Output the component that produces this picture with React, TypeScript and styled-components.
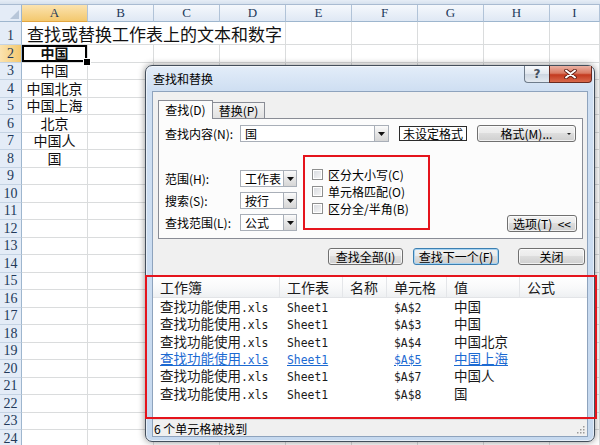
import React from 'react';
import styled, { createGlobalStyle } from 'styled-components';

const GlobalStyle = createGlobalStyle`
  html, body { margin: 0; padding: 0; background: #fff; overflow: hidden; }
  body { font-family: "Noto Sans CJK SC", sans-serif; }
  * { box-sizing: border-box; }
`;

const CJK = `"Noto Sans CJK SC", "Noto Sans", sans-serif`;

const Page = styled.div`
  position: relative;
  width: 600px;
  height: 445px;
  overflow: hidden;
  background: #fff;
`;

/* ---------- Spreadsheet ---------- */
const Sheet = styled.div`
  display: grid;
  grid-template-columns: 22px repeat(8, 66px) 50px;
  grid-template-rows: 5px 17px 23px repeat(23, 17.5px);
  font-family: ${CJK};
`;

const TopStrip = styled.div`
  grid-column: 1 / -1;
  background: linear-gradient(#e6edf6, #d6e1ee);
  border-bottom: 1px solid #a9bbd1;
`;

const Corner = styled.div`
  position: relative;
  background: #e4ecf7;
  border-right: 1px solid #9eb6ce;
  border-bottom: 1px solid #9eb6ce;
  &::after {
    content: '';
    position: absolute;
    right: 2px;
    bottom: 2px;
    border-left: 9px solid transparent;
    border-bottom: 9px solid #b7c6d9;
  }
`;

const ColHead = styled.div<{ $active?: boolean }>`
  display: flex;
  align-items: center;
  justify-content: center;
  font-family: "Liberation Serif", serif;
  font-size: 13px;
  color: #22395a;
  background: ${(p) =>
    p.$active ? 'linear-gradient(#fbe3b0, #f3c86e)' : 'linear-gradient(#f5f8fc, #dfe8f4)'};
  border-right: 1px solid #b1c3d8;
  border-bottom: 1px solid ${(p) => (p.$active ? '#e2a640' : '#9eb6ce')};
`;

const RowHead = styled.div<{ $active?: boolean }>`
  display: flex;
  align-items: flex-end;
  justify-content: center;
  font-family: "Liberation Serif", serif;
  font-size: 14px;
  line-height: 17px;
  color: #22395a;
  background: ${(p) => (p.$active ? 'linear-gradient(90deg, #fbe3b0, #f3c86e)' : '#e4ecf7')};
  border-right: 1px solid #9eb6ce;
  border-bottom: 1px solid #c5d3e3;
`;

const Cell = styled.div<{ $center?: boolean; $bold?: boolean; $selected?: boolean; $span?: number; $big?: boolean }>`
  position: relative;
  grid-column: span ${(p) => p.$span || 1};
  display: flex;
  align-items: center;
  justify-content: ${(p) => (p.$center ? 'center' : 'flex-start')};
  padding-left: ${(p) => (p.$big ? 5 : 0)}px;
  white-space: nowrap;
  font-size: ${(p) => (p.$big ? 17 : 14)}px;
  line-height: ${(p) => (p.$big ? 21 : 17)}px;
  font-weight: ${(p) => (p.$bold ? 700 : 400)};
  color: #111;
  border-right: 1px solid #dadcdd;
  border-bottom: 1px solid #dadcdd;
  box-shadow: ${(p) => (p.$selected ? 'inset 0 0 0 2px #000' : 'none')};
  &::after {
    content: '';
    display: ${(p) => (p.$selected ? 'block' : 'none')};
    position: absolute;
    right: -4px;
    bottom: -4px;
    width: 6px;
    height: 6px;
    background: #000;
    border: 1px solid #fff;
    z-index: 1;
  }
`;

/* ---------- Dialog ---------- */
const Dialog = styled.div`
  position: absolute;
  left: 145px;
  top: 65px;
  width: 450px;
  height: 377px;
  border: 1px solid #434e5b;
  border-radius: 7px;
  padding: 0 6px 4px 6px;
  background: linear-gradient(180deg, #e3edf9 0px, #cfdff2 24px, #c6d9ef 100%);
  box-shadow: 0 0 7px rgba(0, 0, 0, 0.45), inset 0 0 0 1px rgba(255, 255, 255, 0.55);
  display: flex;
  flex-direction: column;
  font-family: ${CJK};
  font-size: 12px;
  color: #000;
  z-index: 1;
`;

const TitleBar = styled.div`
  height: 25px;
  display: flex;
  justify-content: space-between;
  align-items: flex-start;
`;

const TitleText = styled.div`
  margin-top: 6px;
  padding-left: 1px;
  font-size: 12px;
  line-height: 14px;
`;

const CaptionGroup = styled.div`
  display: flex;
  margin-right: -4px;
`;

const HelpBtn = styled.div`
  width: 25px;
  height: 17px;
  border: 1px solid #6f7c8b;
  border-top: none;
  border-right: none;
  border-radius: 0 0 0 4px;
  background: linear-gradient(#f7f9fc, #e2e8ef 48%, #cdd6e1 52%, #e3e9f0);
  display: flex;
  align-items: center;
  justify-content: center;
  font-family: "DejaVu Sans", sans-serif;
  font-weight: 700;
  font-size: 12px;
  color: #44505f;
`;

const CloseBtn = styled.div`
  width: 43px;
  height: 17px;
  border: 1px solid #6a2a20;
  border-top: none;
  border-radius: 0 0 4px 0;
  background: linear-gradient(#eab1a3, #d97a63 45%, #c3391f 55%, #d8694c);
  display: flex;
  align-items: center;
  justify-content: center;
`;

const Client = styled.div`
  flex: 1;
  background: #f0f0f0;
  border: 1px solid #8ea3bd;
  display: flex;
  flex-direction: column;
`;

const Tabs = styled.div`
  position: relative;
  z-index: 1;
  display: flex;
  align-items: flex-end;
  height: 18px;
  margin: 8px 0 0 5px;
`;

const Tab = styled.div<{ $active?: boolean }>`
  width: ${(p) => (p.$active ? 55 : 53)}px;
  height: ${(p) => (p.$active ? 19 : 16)}px;
  margin-bottom: ${(p) => (p.$active ? -1 : 0)}px;
  margin-left: ${(p) => (p.$active ? 0 : -1)}px;
  border: 1px solid #898c95;
  border-bottom: none;
  background: ${(p) => (p.$active ? '#fcfcfc' : 'linear-gradient(#f4f4f4, #e1e1e1)')};
  display: flex;
  align-items: center;
  justify-content: center;
  font-size: 12px;
  line-height: 14px;
`;

const Panel = styled.div`
  margin-left: 5px;
  width: 425px;
  height: 121px;
  border: 1px solid #898c95;
  background: #fcfcfc;
  display: flex;
  flex-direction: column;
`;

const FindRow = styled.div`
  margin-top: 6px;
  height: 17px;
  padding-left: 6px;
  display: flex;
  align-items: center;
`;

const Label = styled.div`
  width: 75px;
  white-space: nowrap;
  font-size: 12px;
  line-height: 15px;
`;

const Combo = styled.div<{ $w: number }>`
  width: ${(p) => p.$w}px;
  height: 17px;
  background: #fff;
  border: 1px solid #a9afb8;
  display: flex;
  align-items: stretch;
`;

const ComboText = styled.div`
  flex: 1;
  padding-left: 4px;
  font-size: 12px;
  line-height: 15px;
  white-space: nowrap;
  overflow: hidden;
`;

const DropBtn = styled.div<{ $w: number }>`
  width: ${(p) => p.$w}px;
  border-left: 1px solid #a9afb8;
  background: linear-gradient(#fbfbfb, #e6e6e6 50%, #d6d6d6);
  display: flex;
  align-items: center;
  justify-content: center;
`;

const FormatState = styled.div`
  margin-left: 10px;
  width: 68px;
  height: 15px;
  border: 1px solid #2b2b2b;
  background: #fff;
  display: flex;
  align-items: center;
  justify-content: center;
  font-size: 12px;
  line-height: 13px;
`;

const Button = styled.div<{ $w: number; $focus?: boolean; $ml?: number }>`
  position: relative;
  width: ${(p) => p.$w}px;
  height: 17px;
  margin-left: ${(p) => p.$ml || 0}px;
  border: 1px solid ${(p) => (p.$focus ? '#3c7fb1' : '#707070')};
  border-radius: 3px;
  background: linear-gradient(#f2f2f2, #ebebeb 45%, #dddddd 50%, #cfcfcf);
  box-shadow: inset 0 0 0 1px ${(p) => (p.$focus ? '#a6d3f2' : 'rgba(255,255,255,0.7)')};
  display: flex;
  align-items: center;
  justify-content: center;
  font-size: 12px;
  line-height: 14px;
  white-space: nowrap;
`;

const Caret = styled.span`
  position: absolute;
  right: 4px;
  top: 7px;
  width: 0;
  height: 0;
  border-left: 2px solid transparent;
  border-right: 2px solid transparent;
  border-top: 2px solid #222;
`;

const OptionsArea = styled.div`
  flex: 1;
  display: flex;
  align-items: flex-start;
`;

const LeftCol = styled.div`
  margin-top: 28px;
  padding-left: 6px;
  display: flex;
  flex-direction: column;
  gap: 5px;
`;

const FieldRow = styled.div`
  height: 17px;
  display: flex;
  align-items: center;
`;

const RedFrame = styled.div`
  margin-left: 6px;
  margin-top: 13px;
  width: 127px;
  height: 75px;
  border: 2px solid #e5141c;
  padding: 9px 0 0 7px;
  display: flex;
  flex-direction: column;
`;

const CheckRow = styled.div`
  height: 17px;
  display: flex;
  align-items: center;
  gap: 5px;
  font-size: 12px;
  line-height: 15px;
  white-space: nowrap;
`;

const CheckBox = styled.span`
  width: 11px;
  height: 11px;
  flex: none;
  border: 1px solid #8e8f8f;
  background: linear-gradient(135deg, #d6d9de, #f7f7f7);
  box-shadow: inset 0 0 0 1px #fff;
`;

const OptionsBtnWrap = styled.div`
  margin-left: auto;
  align-self: flex-end;
  margin-bottom: 6px;
  margin-right: 5px;
`;

const ButtonRow = styled.div`
  margin-top: 9px;
  height: 17px;
  display: flex;
  justify-content: flex-end;
  padding-right: 2px;
`;

const Results = styled.div`
  margin-top: 12px;
  flex: 1;
  background: #fff;
  display: flex;
  flex-direction: column;
`;

const GRID = '127px 63px 44px 60px 73px 1fr';

const ListHeader = styled.div`
  display: grid;
  grid-template-columns: ${GRID};
  height: 21px;
  background: linear-gradient(#ffffff, #f8f9fa 55%, #eef0f2);
  border-bottom: 1px solid #e2e4e7;
`;

const HeadCell = styled.div`
  padding-left: 7px;
  font-size: 14px;
  line-height: 20px;
  color: #1a1a1a;
  border-right: 1px solid #e4e6e9;
  &:last-child { border-right: none; }
`;

const DataRow = styled.div`
  display: grid;
  grid-template-columns: ${GRID};
  height: 17.3px;
  align-items: center;
`;

const DataCell = styled.div<{ $link?: boolean }>`
  padding-left: 7px;
  height: 17px;
  font-size: 13.5px;
  line-height: 17px;
  white-space: nowrap;
  color: ${(p) => (p.$link ? '#1c6ad2' : '#1a1a1a')};
  text-decoration: ${(p) => (p.$link ? 'underline' : 'none')};
`;

const Mono = styled.span`
  font-family: "DejaVu Sans Mono", "Liberation Mono", monospace;
  font-size: 11.4px;
`;

const StatusBar = styled.div`
  position: relative;
  height: 17px;
  border-top: 1px solid #dcdcdc;
  background: #f0f0f0;
  display: flex;
  align-items: center;
  padding-left: 1px;
  font-size: 12px;
  line-height: 15px;
`;

const Grip = styled.svg`
  position: absolute;
  right: 2px;
  bottom: 2px;
`;

const ResultMark = styled.div`
  position: absolute;
  left: 145px;
  top: 275px;
  width: 452px;
  height: 144px;
  border: 2px solid #e5141c;
  pointer-events: none;
  z-index: 2;
`;

const Tri = () => (
  <svg width="7" height="4" viewBox="0 0 7 4">
    <path d="M0 0 H7 L3.5 4 Z" fill="#111" />
  </svg>
);

const colAData: Record<number, string> = {
  2: '中国',
  3: '中国',
  4: '中国北京',
  5: '中国上海',
  6: '北京',
  7: '中国人',
  8: '国',
};

const cols = ['A', 'B', 'C', 'D', 'E', 'F', 'G', 'H', 'I'];

const results = [
  { cell: '$A$2', value: '中国' },
  { cell: '$A$3', value: '中国' },
  { cell: '$A$4', value: '中国北京' },
  { cell: '$A$5', value: '中国上海', link: true },
  { cell: '$A$7', value: '中国人' },
  { cell: '$A$8', value: '国' },
];

export default function App() {
  const rows: React.ReactNode[] = [];
  for (let r = 1; r <= 24; r++) {
    rows.push(
      <RowHead key={`h${r}`} $active={r === 2}>
        {r}
      </RowHead>
    );
    if (r === 1) {
      rows.push(
        <Cell key="r1" $span={4} $big>
          查找或替换工作表上的文本和数字
        </Cell>
      );
      for (let c = 4; c < 9; c++) rows.push(<Cell key={`r1c${c}`} />);
    } else {
      rows.push(
        <Cell key={`r${r}a`} $center $bold={r === 2} $selected={r === 2}>
          {colAData[r] || ''}
        </Cell>
      );
      for (let c = 1; c < 9; c++) rows.push(<Cell key={`r${r}c${c}`} />);
    }
  }

  return (
    <Page>
      <GlobalStyle />
      <Sheet>
        <TopStrip />
        <Corner />
        {cols.map((c) => (
          <ColHead key={c} $active={c === 'A'}>
            {c}
          </ColHead>
        ))}
        {rows}
      </Sheet>

      <Dialog>
        <TitleBar>
          <TitleText>查找和替换</TitleText>
          <CaptionGroup>
            <HelpBtn>?</HelpBtn>
            <CloseBtn>
              <svg width="13" height="10" viewBox="0 0 13 10">
                <path d="M2 1.5 L11 8.5 M11 1.5 L2 8.5" stroke="#5a1b12" strokeWidth="3.6" strokeLinecap="round" />
                <path d="M2 1.5 L11 8.5 M11 1.5 L2 8.5" stroke="#ffffff" strokeWidth="2" strokeLinecap="round" />
              </svg>
            </CloseBtn>
          </CaptionGroup>
        </TitleBar>

        <Client>
          <Tabs>
            <Tab $active>查找(D)</Tab>
            <Tab>替换(P)</Tab>
          </Tabs>
          <Panel>
            <FindRow>
              <Label>查找内容(N):</Label>
              <Combo $w={149}>
                <ComboText>国</ComboText>
                <DropBtn $w={14}>
                  <Tri />
                </DropBtn>
              </Combo>
              <FormatState>未设定格式</FormatState>
              <Button $w={99} $ml={10}>
                格式(M)...
                <Caret />
              </Button>
            </FindRow>
            <OptionsArea>
              <LeftCol>
                <FieldRow>
                  <Label>范围(H):</Label>
                  <Combo $w={57}>
                    <ComboText>工作表</ComboText>
                    <DropBtn $w={13}>
                      <Tri />
                    </DropBtn>
                  </Combo>
                </FieldRow>
                <FieldRow>
                  <Label>搜索(S):</Label>
                  <Combo $w={57}>
                    <ComboText>按行</ComboText>
                    <DropBtn $w={13}>
                      <Tri />
                    </DropBtn>
                  </Combo>
                </FieldRow>
                <FieldRow>
                  <Label>查找范围(L):</Label>
                  <Combo $w={57}>
                    <ComboText>公式</ComboText>
                    <DropBtn $w={13}>
                      <Tri />
                    </DropBtn>
                  </Combo>
                </FieldRow>
              </LeftCol>
              <RedFrame>
                <CheckRow>
                  <CheckBox />
                  区分大小写(C)
                </CheckRow>
                <CheckRow>
                  <CheckBox />
                  单元格匹配(O)
                </CheckRow>
                <CheckRow>
                  <CheckBox />
                  区分全/半角(B)
                </CheckRow>
              </RedFrame>
              <OptionsBtnWrap>
                <Button $w={70}>选项(T)&nbsp;&nbsp;&lt;&lt;</Button>
              </OptionsBtnWrap>
            </OptionsArea>
          </Panel>

          <ButtonRow>
            <Button $w={75}>查找全部(I)</Button>
            <Button $w={86} $ml={10} $focus>
              查找下一个(F)
            </Button>
            <Button $w={67} $ml={19}>
              关闭
            </Button>
          </ButtonRow>

          <Results>
            <ListHeader>
              <HeadCell>工作簿</HeadCell>
              <HeadCell>工作表</HeadCell>
              <HeadCell>名称</HeadCell>
              <HeadCell>单元格</HeadCell>
              <HeadCell>值</HeadCell>
              <HeadCell>公式</HeadCell>
            </ListHeader>
            {results.map((r) => (
              <DataRow key={r.cell}>
                <DataCell $link={r.link}>
                  查找功能使用<Mono>.xls</Mono>
                </DataCell>
                <DataCell $link={r.link}>
                  <Mono>Sheet1</Mono>
                </DataCell>
                <DataCell />
                <DataCell $link={r.link}>
                  <Mono>{r.cell}</Mono>
                </DataCell>
                <DataCell $link={r.link}>{r.value}</DataCell>
                <DataCell />
              </DataRow>
            ))}
          </Results>

          <StatusBar>
            6 个单元格被找到
            <Grip width="10" height="10" viewBox="0 0 10 10">
              {[
                [8, 2],
                [8, 5],
                [5, 5],
                [8, 8],
                [5, 8],
                [2, 8],
              ].map(([x, y]) => (
                <rect key={`${x}-${y}`} x={x} y={y} width="1.5" height="1.5" fill="#9a9a9a" />
              ))}
            </Grip>
          </StatusBar>
        </Client>
      </Dialog>

      <ResultMark />
    </Page>
  );
}
